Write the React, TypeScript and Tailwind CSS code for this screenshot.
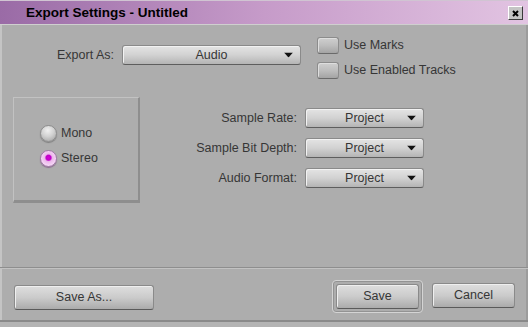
const FONT = { fontFamily: '"Liberation Sans", Arial, sans-serif' };

function Arrow() {
  return (
    <svg width="9" height="5" viewBox="0 0 9 5" className="absolute top-1/2 right-[7px] -translate-y-1/2">
      <polygon points="0,0 9,0 4.5,5" fill="#111" />
    </svg>
  );
}

function Dropdown({ value, width }: { value: string; width: string }) {
  return (
    <div
      className={`relative ${width} h-[20px] shrink-0 rounded-[3px] border border-[#8a8a8a] border-b-[#5e5e5e] bg-linear-to-b from-[#e4e4e4] via-[#d2d2d2] to-[#b4b4b4] shadow-[inset_1px_1px_0_#f2f2f2] flex items-center justify-center text-[12.5px] text-[#363636]`}
    >
      <span>{value}</span>
      <Arrow />
    </div>
  );
}

function Check({ label }: { label: string }) {
  return (
    <div className="flex items-center h-[17px] gap-[5px]">
      <div className="w-[22px] h-[17px] rounded-[3px] border border-[#8c8c8c] border-b-[#6a6a6a] bg-linear-to-b from-[#cfcfcf] via-[#bdbdbd] to-[#a4a4a4] shadow-[inset_1px_1px_0_#dedede]" />
      <span className="text-[12.5px] text-[#363636]">{label}</span>
    </div>
  );
}

function Radio({ label, on }: { label: string; on?: boolean }) {
  return (
    <div className="flex items-center gap-[4px] h-[18px]">
      <div
        className={
          on
            ? "w-[17px] h-[17px] rounded-full border border-[#a07aa6] bg-[radial-gradient(circle_at_50%_45%,#d400d4_0,#c000c8_22%,#eab6ea_34%,#f6d6f6_70%,#c89ccc_100%)] shadow-[0_1px_1px_#8a6a8e]"
            : "w-[17px] h-[17px] rounded-full border border-[#8e8e8e] bg-[radial-gradient(circle_at_45%_30%,#f0f0f0_0,#d2d2d2_45%,#9e9e9e_100%)] shadow-[0_1px_1px_#7e7e7e]"
        }
      />
      <span className="text-[12.5px] text-[#363636]">{label}</span>
    </div>
  );
}

function Btn({ label, width }: { label: string; width: string }) {
  return (
    <div
      className={`${width} h-[25px] rounded-[3px] border border-[#8a8a8a] border-b-[#5a5a5a] bg-linear-to-b from-[#dedede] via-[#cbcbcb] to-[#ababab] shadow-[inset_1px_1px_0_#efefef] flex items-center justify-center text-[12.5px] text-[#363636]`}
    >
      {label}
    </div>
  );
}

export default function App() {
  return (
    <div style={FONT} className="w-[528px] h-[327px] bg-[#adadad] flex flex-col overflow-hidden">
      {/* title bar */}
      <div className="h-[25px] shrink-0 flex items-start justify-between border-t border-t-[#d0c4d2] border-b border-b-[#cfcfcf] bg-linear-to-r from-[#9a6ba6] via-[#c69bc9] to-[#e2c4e2]">
        <span className="pl-[26px] pt-[3px] text-[13.5px] font-bold text-black leading-[17px]">
          Export Settings - Untitled
        </span>
        <div className="mt-[5px] mr-[5px] w-[15px] h-[14px] bg-[#c4c4c4] border border-t-white border-l-white border-r-[#3a3a3a] border-b-[#3a3a3a] flex items-center justify-center">
          <svg width="7" height="7" viewBox="0 0 7 7">
            <path d="M1 1 L6 6 M6 1 L1 6" stroke="#000" strokeWidth="2" />
          </svg>
        </div>
      </div>

      {/* body */}
      <div className="h-[242px] shrink-0 shadow-[inset_2px_0_0_#c4c4c4,inset_-2px_0_0_#9c9c9c]">
        <div className="flex items-start mt-[12px]">
          <div className="flex items-center mt-[8px]">
            <span className="w-[114px] text-right text-[12.5px] text-[#363636]">Export As:</span>
            <div className="ml-[8px]">
              <Dropdown value="Audio" width="w-[179px]" />
            </div>
          </div>
          <div className="ml-[16px] flex flex-col gap-[8px]">
            <Check label="Use Marks" />
            <Check label="Use Enabled Tracks" />
          </div>
        </div>

        <div className="flex items-start mt-[18px]">
          <div className="ml-[13px] w-[127px] h-[106px] border-t border-l border-t-[#c2c2c2] border-l-[#c2c2c2] border-r-2 border-b-[3px] border-r-[#8e8e8e] border-b-[#8e8e8e] flex flex-col gap-[7px] pl-[26px] pt-[26px]">
            <Radio label="Mono" />
            <Radio label="Stereo" on />
          </div>
          <div className="flex flex-col gap-[10px] mt-[11px]">
            {["Sample Rate:", "Sample Bit Depth:", "Audio Format:"].map((l) => (
              <div key={l} className="flex items-center h-[20px]">
                <span className="w-[157px] text-right text-[12.5px] text-[#363636]">{l}</span>
                <div className="ml-[8px]">
                  <Dropdown value="Project" width="w-[119px]" />
                </div>
              </div>
            ))}
          </div>
        </div>
      </div>

      {/* footer */}
      <div className="h-[2px] shrink-0 border-t border-t-[#8e8e8e] border-b border-b-[#c2c2c2]" />
      <div className="h-[51px] shrink-0 flex items-start shadow-[inset_2px_0_0_#c4c4c4,inset_-2px_0_0_#9c9c9c]">
        <div className="ml-[14px] mt-[16px]">
          <Btn label="Save As..." width="w-[140px]" />
        </div>
        <div className="ml-auto mt-[11px] rounded-[4px] border border-[#d4d4d4] p-[3px] shadow-[inset_0_0_0_1px_#939393]">
          <Btn label="Save" width="w-[83px]" />
        </div>
        <div className="ml-[9px] mr-[13px] mt-[14px]">
          <Btn label="Cancel" width="w-[83px]" />
        </div>
      </div>
      <div className="h-[2px] shrink-0 bg-[#8a8a8a]" />
      <div className="flex-1 bg-[#b4b4b4]" />
    </div>
  );
}
